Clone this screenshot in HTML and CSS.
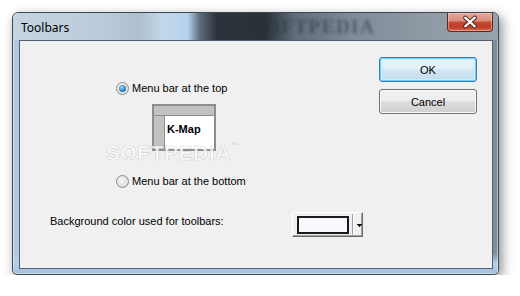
FILE: index.html
```html
<!DOCTYPE html>
<html lang="en">
<head>
    <meta charset="UTF-8">
    <meta name="viewport" content="width=device-width, initial-scale=1.0">
    <title>Toolbars</title>
    <link rel="stylesheet" href="styles.css">
</head>
<body>

<div class="window">
    <div class="titlebar">
        <span class="title">Toolbars</span>
        <span class="title-mark">SOFTPEDIA</span>
        <button class="close" aria-label="Close">
            <svg width="46" height="18" viewBox="0 0 46 18">
                <path d="M18 4.5 L28 13.5 M28 4.5 L18 13.5" stroke="#3b1a14" stroke-width="4.2" stroke-linecap="round"/>
                <path d="M18 4.5 L28 13.5 M28 4.5 L18 13.5" stroke="#ffffff" stroke-width="2.4" stroke-linecap="round"/>
            </svg>
        </button>
    </div>

    <div class="client">
        <div class="main">
            <div class="options">
                <label class="radio-row"><span class="radio checked"></span>Menu bar at the top</label>
                <div class="preview">
                    <div class="preview-top"></div>
                    <div class="preview-body">
                        <div class="preview-side"></div>
                        <div class="preview-area">K-Map</div>
                    </div>
                </div>
                <label class="radio-row radio-bottom"><span class="radio"></span>Menu bar at the bottom</label>
            </div>

            <div class="color-row">
                <span class="color-label">Background color used for toolbars:</span>
                <div class="color-picker">
                    <span class="swatch"></span>
                    <span class="divider"></span>
                    <svg class="arrow" width="5" height="4" viewBox="0 0 5 4">
                        <path d="M0 0 H5 V1 H4 V2 H3 V3 H2 V2 H1 V1 H0 Z" fill="#000"/>
                    </svg>
                </div>
            </div>
        </div>

        <div class="buttons">
            <button class="btn default">OK</button>
            <button class="btn">Cancel</button>
        </div>

        <div class="watermark">SOFTPEDIA<span class="tm">™</span></div>
    </div>
</div>

</body>
</html>
```

FILE: styles.css
```css
body {
    margin: 0;
    background-color: #ffffff;
    font-family: "Liberation Sans", Arial, sans-serif;
    font-size: 11px;
    color: #000;
}

.window {
    margin: 12px 0 0 12px;
    width: 487px;
    height: 263px;
    box-sizing: border-box;
    border: 1px solid #3b4855;
    border-radius: 6px 6px 5px 5px;
    padding: 0 5px 5px 6px;
    display: flex;
    flex-direction: column;
    background: linear-gradient(to bottom, transparent 92%, #b5d0ea 96%, #a3bfdc 100%),
                linear-gradient(to right, #b2c9df 0%, #a7c0d8 40%, #98aabd 75%, #7f8d9b 100%);
    box-shadow: 3px 4px 12px rgba(0, 0, 0, 0.45), inset 0 0 0 1px rgba(255, 255, 255, 0.45);
}

.titlebar {
    position: relative;
    height: 27px;
    margin: 0 -5px 0 -6px;
    padding: 0 5px 0 8px;
    display: flex;
    justify-content: space-between;
    align-items: flex-start;
    border-radius: 5px 5px 0 0;
    background: linear-gradient(to right, #c6d4e2 0%, #bccbdb 18%, #aebfd0 26%, #c3d7ea 31%, #b7d2ee 36%, #5d6d7e 38.5%, #2c333b 42%, #2a3139 52%, #5f6c79 58%, #7f8b97 70%, #8f9aa5 85%, #98a2ac 100%);
}

.title {
    padding-top: 7px;
    font-family: "Noto Sans", "Open Sans", sans-serif;
    font-size: 12px;
    line-height: 15px;
    color: #000;
}

.title-mark {
    position: absolute;
    left: 240px;
    top: 3px;
    font-family: "Liberation Serif", serif;
    font-weight: bold;
    font-size: 19px;
    line-height: 21px;
    letter-spacing: 1.5px;
    color: rgba(38, 48, 58, 0.5);
    filter: blur(1.4px);
}

.close {
    position: relative;
    width: 46px;
    height: 19px;
    padding: 0;
    border: 1px solid #5a2a22;
    border-top: none;
    border-radius: 0 0 4px 4px;
    background: linear-gradient(to bottom, #e7a89a 0%, #d88d7d 42%, #c54a33 52%, #c03c26 78%, #d56a4f 100%);
    box-shadow: inset 0 0 0 1px rgba(255, 200, 190, 0.5);
    display: flex;
}

.close svg {
    display: block;
}

.client {
    position: relative;
    flex: 1;
    display: flex;
    padding: 16px 15px 0 0;
    background-color: #f0f0f0;
    border: 1px solid #50606e;
}

.main {
    flex: 1;
    padding-top: 25px;
}

.options {
    padding-left: 96px;
}

.radio-row {
    display: flex;
    align-items: center;
    height: 13px;
    line-height: 13px;
}

.radio {
    width: 13px;
    height: 13px;
    box-sizing: border-box;
    margin-right: 3px;
    border: 1px solid #8b8c8c;
    border-radius: 50%;
    background: radial-gradient(circle at 40% 40%, #f6f6f6 0%, #e4e4e4 55%, #cdcdcd 100%);
    display: flex;
    align-items: center;
    justify-content: center;
}

.radio.checked::after {
    content: "";
    width: 7px;
    height: 7px;
    border-radius: 50%;
    background: radial-gradient(circle at 40% 35%, #a6dcf7 0%, #3d92d0 45%, #1a4f86 100%);
}

.preview {
    width: 64px;
    height: 47px;
    box-sizing: border-box;
    margin: 9px 0 0 36px;
    border: 2px solid #8e8e8e;
    background-color: #ffffff;
    display: flex;
    flex-direction: column;
}

.preview-top {
    height: 9px;
    background-color: #c2c2c2;
    border-bottom: 1px solid #8e8e8e;
}

.preview-body {
    flex: 1;
    display: flex;
}

.preview-side {
    width: 10px;
    background-color: #c2c2c2;
    border-right: 1px solid #8e8e8e;
}

.preview-area {
    flex: 1;
    padding: 7px 0 0 2px;
    font-weight: bold;
    line-height: 13px;
}

.radio-bottom {
    margin-top: 24px;
}

.color-row {
    display: flex;
    align-items: flex-start;
    margin-top: 24px;
    padding-left: 30px;
}

.color-label {
    width: 242px;
    margin-top: 3px;
    line-height: 13px;
}

.color-picker {
    width: 71px;
    height: 25px;
    box-sizing: border-box;
    display: flex;
    align-items: center;
    padding: 0 0 0 4px;
    border: 1px solid;
    border-color: #ffffff #6b6b6b #6b6b6b #ffffff;
    box-shadow: inset -1px -1px 0 #a0a0a0;
    background-color: #f0f0f0;
}

.swatch {
    width: 52px;
    height: 18px;
    box-sizing: border-box;
    border: 2px solid #1a1a1a;
    background-color: #f8f8ff;
}

.divider {
    width: 1px;
    height: 21px;
    margin-left: 3px;
    background-color: #a0a0a0;
    border-right: 1px solid #ffffff;
}

.arrow {
    margin: 2px 0 0 3px;
}

.buttons {
    width: 98px;
    display: flex;
    flex-direction: column;
    gap: 7px;
}

.btn {
    height: 25px;
    padding: 0;
    font-family: "Liberation Sans", Arial, sans-serif;
    font-size: 11px;
    color: #000;
    border: 1px solid #707070;
    border-radius: 3px;
    background: linear-gradient(to bottom, #f2f2f2 0%, #ebebeb 48%, #dddddd 52%, #cfcfcf 100%);
    box-shadow: inset 0 0 0 1px #fbfbfb;
}

.btn.default {
    border-color: #3c7fb1;
    background: linear-gradient(to bottom, #eaf5fc 0%, #e2eff8 48%, #d2e5f3 52%, #c4dbec 100%);
    box-shadow: inset 0 0 0 1px #6fd0f5, inset 0 0 0 2px #c9eefc;
}

.watermark {
    position: absolute;
    left: 86px;
    top: 100px;
    font-family: "Liberation Sans", Arial, sans-serif;
    font-weight: bold;
    font-size: 21px;
    letter-spacing: 0.5px;
    color: rgba(255, 255, 255, 0.8);
    -webkit-text-stroke: 0.7px rgba(140, 140, 140, 0.35);
    pointer-events: none;
}

.watermark .tm {
    font-size: 8px;
    vertical-align: top;
    -webkit-text-stroke: 0;
    color: rgba(150, 150, 150, 0.35);
}
```
